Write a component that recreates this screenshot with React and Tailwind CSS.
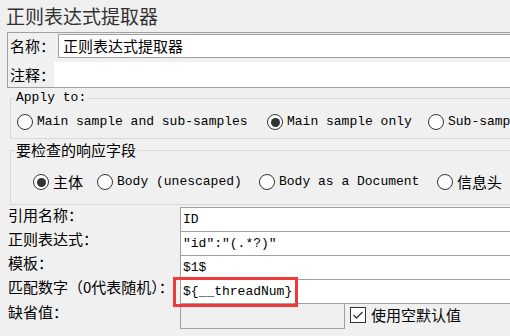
const cjk = "font-['Noto_Sans_CJK_SC','Microsoft_YaHei',sans-serif]"
const mono = "font-['Liberation_Mono','Noto_Sans_CJK_SC',monospace]"

const Radio = ({ checked }) => (
  <span className="w-[16px] h-[16px] rounded-full border border-[#333] bg-white flex items-center justify-center shrink-0">
    {checked && <span className="w-[9px] h-[9px] rounded-full bg-[#333]" />}
  </span>
)

const RadioItem = ({ checked, label, width, font, size }) => (
  <div className={`flex items-center shrink-0 ${width}`}>
    <Radio checked={checked} />
    <span className={`ml-[4px] whitespace-nowrap text-black leading-[18px] ${font} ${size}`}>{label}</span>
  </div>
)

const FieldRow = ({ label, value, last }) => (
  <div className={`flex ${last ? 'h-[25px]' : 'h-[24px]'}`}>
    <div className={`ml-[8px] w-[172px] shrink-0 self-start text-[15px] leading-[16px] text-black whitespace-nowrap ${cjk}`}>{label}</div>
    <div className={`relative flex-1 bg-white border-t border-l border-[#a0a0a0] ${last ? 'border-b' : ''} flex items-center`}>
      <span className={`pl-[2px] text-[13px] leading-[22px] text-black whitespace-nowrap ${mono}`}>{value}</span>
      {last && (
        <div className="absolute left-[-8px] top-[-3px] w-[125px] h-[30px] border-[3px] border-[#ee3a3a] z-10 pointer-events-none" />
      )}
    </div>
  </div>
)

export default function App() {
  return (
    <div className={`w-[510px] h-[336px] bg-[#f0f0f0] overflow-hidden ${cjk}`}>
      {/* title */}
      <div className="h-[32px] pl-[6px] text-[19px] leading-[31px] text-[#333] whitespace-nowrap">正则表达式提取器</div>

      {/* name / comment panel */}
      <div className="ml-[7px] w-[520px] border border-[#a0a0a0] flex flex-col">
        <div className="mt-[1px] h-[24px] flex">
          <div className="w-[50px] shrink-0 pl-[2px] text-[15px] leading-[24px] text-black whitespace-nowrap">名称：</div>
          <div className="flex-1 bg-white border border-[#a0a0a0] flex items-center">
            <span className="pl-[4px] text-[15px] leading-[20px] text-black whitespace-nowrap">正则表达式提取器</span>
          </div>
        </div>
        <div className="mt-[4px] h-[25px] flex">
          <div className="w-[46px] shrink-0 pl-[2px] text-[15px] leading-[25px] text-black whitespace-nowrap">注释：</div>
          <div className="flex-1 bg-white" />
        </div>
      </div>

      {/* apply to */}
      <fieldset className="mt-[2px] ml-[10px] w-[520px] border border-[#d9d9d9]">
        <legend className={`ml-[4px] px-[1px] text-[13px] leading-[16px] text-black ${mono}`}>Apply to:</legend>
        <div className="h-[32px] pl-[6px] flex items-center">
          <RadioItem label="Main sample and sub-samples" width="w-[250px]" font={mono} size="text-[13px]" />
          <RadioItem checked label="Main sample only" width="w-[161px]" font={mono} size="text-[13px]" />
          <RadioItem label="Sub-samples only" width="w-[160px]" font={mono} size="text-[13px]" />
        </div>
      </fieldset>

      {/* field to check */}
      <fieldset className="mt-[1px] ml-[10px] w-[520px] border border-[#d9d9d9]">
        <legend className="ml-[4px] px-[1px] text-[15px] leading-[20px] text-black">要检查的响应字段</legend>
        <div className="h-[44px] pl-[22px] flex items-center">
          <RadioItem checked label="主体" width="w-[64px]" font={cjk} size="text-[15px]" />
          <RadioItem label="Body (unescaped)" width="w-[162px]" font={mono} size="text-[13px]" />
          <RadioItem label="Body as a Document" width="w-[178px]" font={mono} size="text-[13px]" />
          <RadioItem label="信息头" width="w-[100px]" font={cjk} size="text-[15px]" />
        </div>
      </fieldset>

      {/* fields */}
      <div className="mt-[2px] flex flex-col">
        <FieldRow label="引用名称：" value="ID" />
        <FieldRow label="正则表达式：" value={'"id":"(.*?)"'} />
        <FieldRow label="模板：" value="$1$" />
        <FieldRow label="匹配数字（0代表随机）：" value="${__threadNum}" last />
        <div className="flex h-[25px]">
          <div className="ml-[8px] w-[172px] shrink-0 self-start text-[15px] leading-[16px] text-black">缺省值：</div>
          <div className="w-[165px] h-[25px] border-x border-b border-[#a0a0a0] bg-[#f0f0f0]" />
          <div className="ml-[5px] mt-[3px] self-start flex items-center">
            <span className="w-[16px] h-[16px] border border-[#333] bg-white flex items-center justify-center">
              <svg width="12" height="12" viewBox="0 0 12 12">
                <polyline points="1.5,6 4.5,9 10.5,3" fill="none" stroke="#333" strokeWidth="1.3" />
              </svg>
            </span>
            <span className="ml-[5px] text-[15px] leading-[16px] text-black">使用空默认值</span>
          </div>
        </div>
      </div>
    </div>
  )
}
